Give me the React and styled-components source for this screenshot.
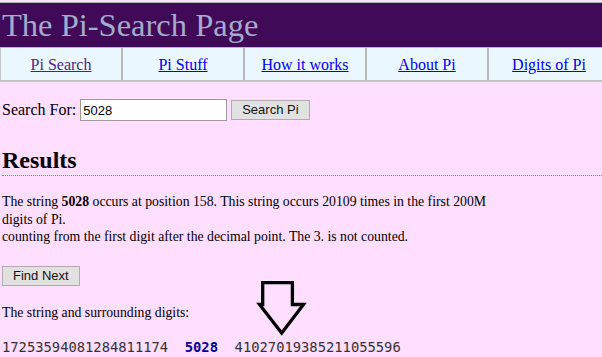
import React, { useState } from "react";
import styled, { createGlobalStyle } from "styled-components";

const GlobalStyle = createGlobalStyle`
  html, body {
    margin: 0;
    padding: 0;
    background: #ffdeff;
    overflow: hidden;
  }
  body {
    font-family: "Liberation Serif", "Times New Roman", serif;
    font-size: 16px;
    color: #000;
  }
`;

const Page = styled.div`
  position: relative;
  width: 612px;
  padding-top: 2px;
`;

const Banner = styled.div`
  border-top: 1px solid #b0b0b0;
  background: #400a58;
  height: 44px;
  padding-left: 2px;
`;

const Title = styled.h1`
  margin: 0;
  font-size: 32.5px;
  font-weight: normal;
  line-height: 44px;
  color: #a4accc;
`;

const NavBar = styled.div`
  display: grid;
  grid-template-columns: repeat(5, 122px);
  background: #ebf7ff;
  border-top: 1px solid #b8b8b8;
  border-bottom: 2px solid #c4c4c4;
  border-left: 1px solid #c4c4c4;
`;

const NavCell = styled.div`
  display: flex;
  align-items: center;
  justify-content: center;
  height: 32px;
  padding-top: 2px;
  box-sizing: border-box;
  border-right: 2px solid #b8b8b8;
`;

const NavLink = styled.a`
  color: ${(p) => (p.$visited ? "#551a8b" : "#0000ee")};
  text-decoration: underline;
`;

const Content = styled.div`
  padding: 0 2px;
`;

const SearchForm = styled.form`
  display: flex;
  align-items: center;
  gap: 4px;
  margin-top: 17px;
  line-height: 18px;
`;

const SearchInput = styled.input`
  width: 147px;
  height: 22px;
  box-sizing: border-box;
  padding: 0 2px;
  border: 1px solid #9a9a9a;
  background: #fff;
  font-family: "Liberation Sans", Arial, sans-serif;
  font-size: 13px;
  color: #000;
  outline: none;
`;

const Button = styled.button`
  height: 20px;
  box-sizing: border-box;
  padding: 0 10px;
  border: 1px solid #adadad;
  border-radius: 0;
  background: #e1e1e1;
  font-family: "Liberation Sans", Arial, sans-serif;
  font-size: 13px;
  color: #111;
  line-height: 18px;
`;

const Heading = styled.h2`
  margin: 25px 0 0;
  font-size: 24px;
  font-weight: bold;
  line-height: 28px;
  padding-bottom: 1px;
  border-bottom: 1px dotted #e8506a;
`;

const Text = styled.p`
  margin: ${(p) => p.$top}px 0 0;
  max-width: 512px;
  font-size: 13.75px;
  line-height: ${(p) => p.$lh || 18}px;
`;

const ButtonRow = styled.div`
  margin-top: 20px;
  display: flex;
`;

const Digits = styled.div`
  margin-top: 16px;
  font-family: "DejaVu Sans Mono", "Liberation Mono", monospace;
  font-size: 13.8px;
  line-height: 18px;
  color: #333;
  white-space: pre;
`;

const Match = styled.b`
  color: #000099;
`;

const Arrow = styled.svg`
  position: absolute;
  left: 255px;
  top: 278px;
`;

const links = ["Pi Search", "Pi Stuff", "How it works", "About Pi", "Digits of Pi"];

export default function App() {
  const [query, setQuery] = useState("5028");

  return (
    <>
      <GlobalStyle />
      <Page>
        <Banner>
          <Title>The Pi-Search Page</Title>
        </Banner>
        <NavBar>
          {links.map((l, i) => (
            <NavCell key={l}>
              <NavLink href="#" $visited={i === 0}>{l}</NavLink>
            </NavCell>
          ))}
        </NavBar>
        <Content>
          <SearchForm onSubmit={(e) => e.preventDefault()}>
            <span>Search For:</span>
            <SearchInput value={query} onChange={(e) => setQuery(e.target.value)} />
            <Button type="submit">Search Pi</Button>
          </SearchForm>
          <Heading>Results</Heading>
          <Text $top={17} $lh={17.5}>
            The string <b>5028</b> occurs at position 158. This string occurs 20109 times in the first 200M digits of Pi.
            <br />
            counting from the first digit after the decimal point. The 3. is not counted.
          </Text>
          <ButtonRow>
            <Button>Find Next</Button>
          </ButtonRow>
          <Text $top={18}>The string and surrounding digits:</Text>
          <Digits>
            {"17253594081284811174  "}
            <Match>5028</Match>
            {"  41027019385211055596"}
          </Digits>
        </Content>
        <Arrow width="56" height="62" viewBox="0 0 56 62">
          <path
            d="M7.7 4.6 H37.4 V26.5 H48.5 L26.7 55 L4.5 26.5 H7.7 Z"
            fill="none"
            stroke="#000"
            strokeWidth="3.3"
            strokeLinejoin="miter"
          />
        </Arrow>
      </Page>
    </>
  );
}
